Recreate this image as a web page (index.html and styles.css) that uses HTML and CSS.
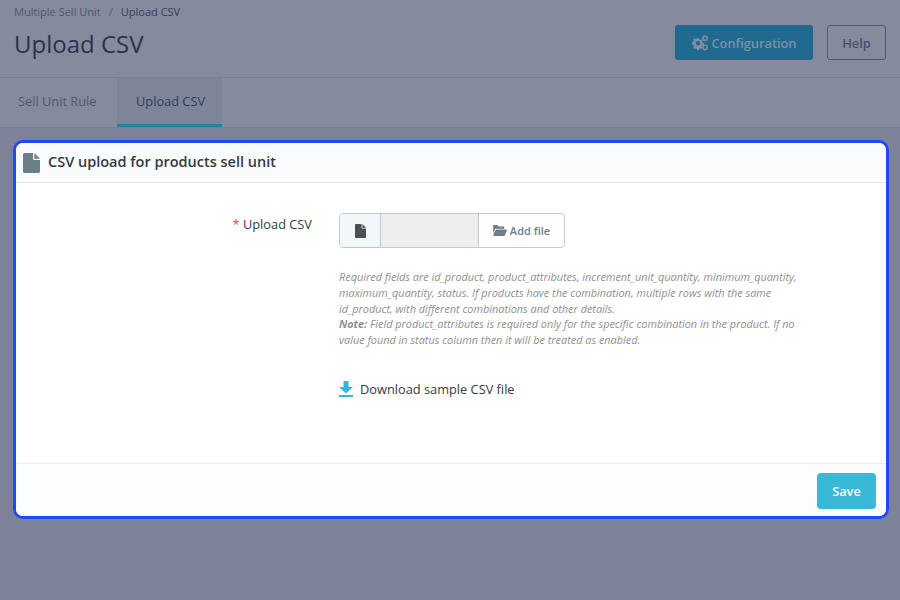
FILE: index.html
```html
<!DOCTYPE html>
<html lang="en">
<head>
<meta charset="utf-8">
<title>Upload CSV</title>
<link rel="stylesheet" href="styles.css">
</head>
<body>
<header class="page-head">
  <div class="head-left">
    <nav class="crumbs"><span class="crumb">Multiple Sell Unit</span><span class="crumb-sep">/</span><span class="crumb-current">Upload CSV</span></nav>
    <h1 class="title">Upload CSV</h1>
  </div>
  <div class="head-actions">
    <a class="btn-config">
      <svg class="gears" viewBox="0 0 16 16" width="16" height="16"><g fill="#7f8ea6"><path fill-rule="evenodd" d="M5 3.200h2l.3 1.300 1 .45 1.150-.7 1.400 1.400-.7 1.150.45 1 1.300.3v2l-1.300.3-.45 1-.05.1.75 1.100-1.400 1.400-1.150-.7-1 .45-.3 1.250H5l-.3-1.250-1-.45-1.150.7-1.400-1.400.7-1.150-.45-1L.1 9.100v-2l1.300-.3.45-1-.7-1.150 1.400-1.400 1.150.7 1-.45zM6 5.900a2.200 2.200 0 1 0 0 4.400 2.200 2.200 0 0 0 0-4.400z"/><path fill-rule="evenodd" d="M12.600 0h1l.2.8.55.25.7-.4.7.7-.4.7.25.55.8.2v1l-.8.2-.25.55.4.7-.7.7-.7-.4-.55.25-.2.8h-1l-.2-.8-.55-.25-.7.4-.7-.7.4-.7-.25-.55-.8-.2v-1l.8-.2.25-.55-.4-.7.7-.7.7.4.55-.25zm.5 1.900a1.300 1.300 0 1 0 0 2.600 1.300 1.300 0 0 0 0-2.600z"/><path fill-rule="evenodd" d="M12.600 9.200h1l.2.8.55.25.7-.4.7.7-.4.7.25.55.8.2v1l-.8.2-.25.55.4.7-.7.7-.7-.4-.55.25-.2.8h-1l-.2-.8-.55-.25-.7.4-.7-.7.4-.7-.25-.55-.8-.2v-1l.8-.2.25-.55-.4-.7.7-.7.7.4.55-.25zm.5 1.900a1.300 1.300 0 1 0 0 2.600 1.300 1.300 0 0 0 0-2.600z"/></g></svg>
      <span>Configuration</span>
    </a>
    <a class="btn-help">Help</a>
  </div>
</header>
<nav class="tabs">
  <a class="tab tab-plain">Sell Unit Rule</a>
  <a class="tab tab-active">Upload CSV</a>
</nav>
<main class="content">
  <section class="panel">
    <div class="panel-head">
      <svg class="panel-icon" viewBox="0 0 17 20" width="17" height="20"><path fill="#6a8088" d="M1.500 0H10v5.500c0 .8.7 1.500 1.500 1.500H17v11.500c0 .8-.7 1.500-1.500 1.500h-14C.7 20 0 19.300 0 18.500v-17C0 .7.700 0 1.500 0zM11.300 0 17 5.700h-5.700z"/></svg>
      <h2 class="panel-title">CSV upload for products sell unit</h2>
    </div>
    <div class="panel-body">
      <div class="row">
        <label class="label"><span class="req">*</span> Upload CSV</label>
        <div class="field">
          <div class="file-input">
            <span class="file-addon"><svg viewBox="0 0 11 14" width="11" height="14"><path fill="#4f4f4f" d="M0 1c0-.6.4-1 1-1h5.500v3.500c0 .5.400 1 1 1H11V13c0 .6-.4 1-1 1H1c-.6 0-1-.4-1-1zM7.300 0 11 3.700H7.300z"/></svg></span>
            <span class="file-name"></span>
            <span class="file-btn"><svg viewBox="0 0 15 12" width="14" height="11"><path fill="#6c7f89" d="M0 1.200C0 .5.500 0 1.200 0h3.300l1.500 1.500h5c.7 0 1.200.5 1.200 1.200V4H3.500C2.700 4 2 4.500 1.700 5.200L0 9.500z"/><path fill="#6c7f89" d="M3.500 5H14c.7 0 1.200.7.900 1.300l-2 5c-.2.4-.6.700-1.100.7H1.200C.500 12 0 11.300.300 10.700l2.200-5C2.700 5.300 3.100 5 3.500 5z"/></svg>Add file</span>
          </div>
          <p class="help"><span class="help-line">Required fields are id_product, product_attributes, increment_unit_quantity, minimum_quantity,</span> <span class="help-line">maximum_quantity, status. If products have the combination, multiple rows with the same</span> <span class="help-line">id_product, with different combinations and other details.</span> <span class="help-line"><b>Note:</b> Field product_attributes is required only for the specific combination in the product. If no</span> <span class="help-line">value found in status column then it will be treated as enabled.</span></p>
          <a class="download">
            <svg viewBox="0 0 14 16" width="14" height="16"><path fill="#35b6d7" d="M4.500 0h5v6H14L7 12.500 0 6h4.500z"/><rect fill="#35b6d7" x="0" y="14" width="14" height="2"/></svg>
            <span>Download sample CSV file</span>
          </a>
        </div>
      </div>
    </div>
    <div class="panel-foot"><button class="btn-save" type="button">Save</button></div>
  </section>
</main>
</body>
</html>
```
FILE: styles.css
```css
* { box-sizing: border-box; }
html, body { margin: 0; height: 100%; }
body {
  width: 900px;
  height: 600px;
  overflow: hidden;
  background: #7c8398;
  font-family: "Open Sans", sans-serif;
  color: #363a41;
  display: flex;
  flex-direction: column;
}
.page-head {
  height: 78px;
  background: #858a9d;
  border-bottom: 1px solid #7a8093;
  padding: 0 14px;
  display: flex;
  justify-content: space-between;
}
.crumbs {
  font-size: 11px;
  line-height: 15px;
  padding-top: 4px;
  display: flex;
}
.crumb { color: #4d5a70; }
.crumb-sep { color: #4d5a70; margin: 0 8px; }
.crumb-current { color: #36415a; }
.title {
  margin: 8px 0 0;
  font-size: 24px;
  line-height: 33px;
  font-weight: 400;
  color: #29344f;
}
.head-actions {
  display: flex;
  gap: 14px;
  padding-top: 25px;
}
.btn-config {
  width: 138px;
  height: 35px;
  background: #1f6a8e;
  border-radius: 3px;
  display: flex;
  align-items: center;
  justify-content: center;
  gap: 4px;
  font-size: 12.800px;
  font-weight: 600;
  color: #7f8ea6;
}
.btn-help {
  width: 59px;
  height: 35px;
  border: 1px solid #4b5a78;
  border-radius: 3px;
  display: flex;
  align-items: center;
  justify-content: center;
  font-size: 12.800px;
  font-weight: 600;
  color: #45536f;
}
.tabs {
  height: 50px;
  background: #858a9d;
  border-bottom: 1px solid #7a8093;
  display: flex;
}
.tab {
  height: 49px;
  display: flex;
  align-items: center;
  font-size: 12.800px;
  color: #4d5a70;
}
.tab-plain {
  width: 117px;
  padding: 0 0 3px 18px;
}
.tab-active {
  width: 105px;
  padding-left: 19px;
  background: #7f8599;
  border-bottom: 3px solid #26809f;
  color: #2f3d59;
}
.content { padding: 12px 12px 0 13px; }
.panel {
  width: 876px;
  height: 379px;
  background: #fff;
  border: 3px solid #2148f5;
  border-radius: 10px;
  display: flex;
  flex-direction: column;
  overflow: hidden;
}
.panel-head {
  height: 40px;
  background: #fafbfc;
  border-bottom: 1px solid #e6e8ea;
  display: flex;
  align-items: center;
  padding-left: 7px;
  gap: 8px;
  flex: none;
}
.panel-title {
  margin: 0 0 3px;
  font-size: 14.500px;
  font-weight: 600;
  color: #363a41;
}
.panel-body { flex: 1; padding-top: 30px; }
.row { display: flex; }
.label {
  width: 296px;
  text-align: right;
  font-size: 12.800px;
  line-height: 17px;
  padding-top: 3px;
  color: #363a41;
}
.req { color: #f54c3e; }
.field { margin-left: 27px; width: 462px; }
.file-input {
  width: 226px;
  height: 35px;
  border: 1px solid #bbcdd2;
  border-radius: 4px;
  display: flex;
  overflow: hidden;
}
.file-addon {
  width: 41px;
  background: #f4f7f9;
  border-right: 1px solid #bbcdd2;
  display: flex;
  align-items: center;
  justify-content: center;
}
.file-name {
  width: 98px;
  background: #eee;
  border-right: 1px solid #bbcdd2;
}
.file-btn {
  flex: 1;
  display: flex;
  align-items: center;
  justify-content: center;
  gap: 3px;
  font-size: 11px;
  font-weight: 600;
  color: #6c7f89;
}
.help {
  margin: 21.400px 0 0;
  font-size: 10.880px;
  line-height: 15.600px;
  font-style: italic;
  color: #8f8f8f;
}
.help-line { display: block; white-space: nowrap; }
.download {
  display: flex;
  align-items: center;
  gap: 7px;
  margin-top: 33.600px;
  font-size: 12.800px;
  line-height: 17px;
  color: #363a41;
}
.panel-foot {
  height: 53px;
  flex: none;
  background: #fcfdfe;
  border-top: 1px solid #e9ebed;
  display: flex;
  align-items: center;
  justify-content: flex-end;
  padding-right: 10px;
}
.btn-save {
  width: 59px;
  height: 36px;
  margin-top: 1px;
  background: #39b8d7;
  border: 0;
  border-radius: 4px;
  font-family: inherit;
  font-size: 12.800px;
  font-weight: 600;
  color: #fff;
}
```
